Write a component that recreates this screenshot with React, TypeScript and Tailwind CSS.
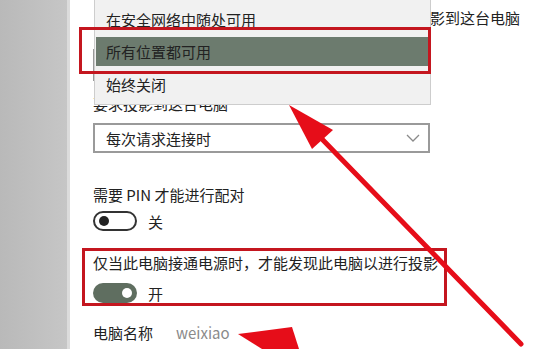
import React from 'react'

const font = { fontFamily: '"Noto Sans CJK SC", "Noto Sans", sans-serif' }

function Toggle({ on }: { on: boolean }) {
  return on ? (
    <div className="w-[44px] h-[20px] rounded-full bg-[#5f6e60] flex items-center justify-end pr-[5px]">
      <div className="w-[10px] h-[10px] rounded-full bg-white" />
    </div>
  ) : (
    <div className="w-[44px] h-[20px] rounded-full border-2 border-[#333] flex items-center pl-[4px]">
      <div className="w-[10px] h-[10px] rounded-full bg-[#222]" />
    </div>
  )
}

function Arrows() {
  return (
    <svg className="absolute inset-0 pointer-events-none" width="555" height="349" viewBox="0 0 555 349">
      <line x1="320" y1="137" x2="521" y2="344" stroke="#e60d19" strokeWidth="5" strokeLinecap="round" />
      <polygon points="289,105 333,130 312,149" fill="#e60d19" />
      <polygon points="238,334 292,327 299,349 262,349" fill="#e60d19" />
    </svg>
  )
}

export default function App() {
  return (
    <div className="relative w-[555px] h-[349px] overflow-hidden bg-white text-[15px] text-[#222]" style={font}>
      <div className="flex h-full">
        {/* left rail */}
        <div className="w-[67px] shrink-0 bg-gradient-to-r from-[#b9b9b9] to-[#c6c6c6]" />
        <div className="w-[3px] shrink-0 bg-[#dcdcdc]" />

        <div className="flex-1 pl-[23px] flex flex-col">
          <div className="h-[36px] ml-[12px] w-[415px] flex items-center justify-end whitespace-nowrap overflow-hidden">
            某些设备可以投影到这台电脑
          </div>
          <div className="h-[57px] flex items-center">
            <div className="w-[337px] h-[32px] border-2 border-[#999]" />
          </div>
          <div className="h-[20px] flex items-center leading-none">要求投影到这台电脑</div>

          <div className="mt-[10px] w-[337px] h-[30px] border-2 border-[#9a9a9a] flex items-center justify-between pl-[11px] pr-[8px]">
            <span className="leading-none">每次请求连接时</span>
            <svg width="14" height="8" viewBox="0 0 14 8">
              <path d="M1 1 L7 7 L13 1" fill="none" stroke="#8a8a8a" strokeWidth="1.3" />
            </svg>
          </div>

          <div className="mt-[31px] h-[20px] flex items-center leading-none">需要 PIN 才能进行配对</div>
          <div className="mt-[7px] h-[20px] flex items-center gap-[11px]">
            <Toggle on={false} />
            <span className="leading-none">关</span>
          </div>

          <div className="mt-[17px] -ml-[11px] w-[365px] border-[3px] border-[#c4161f] pl-[8px] pt-[1px]">
            <div className="h-[20px] flex items-center leading-none whitespace-nowrap">
              仅当此电脑接通电源时，才能发现此电脑以进行投影
            </div>
            <div className="mt-[11px] h-[20px] flex items-center gap-[11px]">
              <Toggle on />
              <span className="leading-none">开</span>
            </div>
          </div>

          <div className="mt-[16px] h-[20px] flex items-center leading-none">
            <span>电脑名称</span>
            <span className="ml-[23px] text-[#8a8a8a]">weixiao</span>
          </div>
        </div>
      </div>

      {/* open dropdown menu */}
      <div className="absolute left-[94px] top-[-2px] w-[337px] h-[107px] bg-[#f1f1f1] border border-[#cdcdcd] pt-[4px] flex flex-col">
        <div className="h-[32px] flex items-center pl-[11px] leading-none">在安全网络中随处可用</div>
        <div className="h-[33px] flex items-center px-[1px]">
          <div className="w-full h-[29px] bg-[#6c7b6e] flex items-center pl-[10px] leading-none">所有位置都可用</div>
        </div>
        <div className="h-[32px] flex items-center pl-[11px] leading-none">始终关闭</div>
      </div>

      {/* annotation box around highlighted item */}
      <div className="absolute left-[79px] top-[27px] w-[352px] h-[47px] border-[3px] border-[#c4161f]" />

      <Arrows />
    </div>
  )
}
